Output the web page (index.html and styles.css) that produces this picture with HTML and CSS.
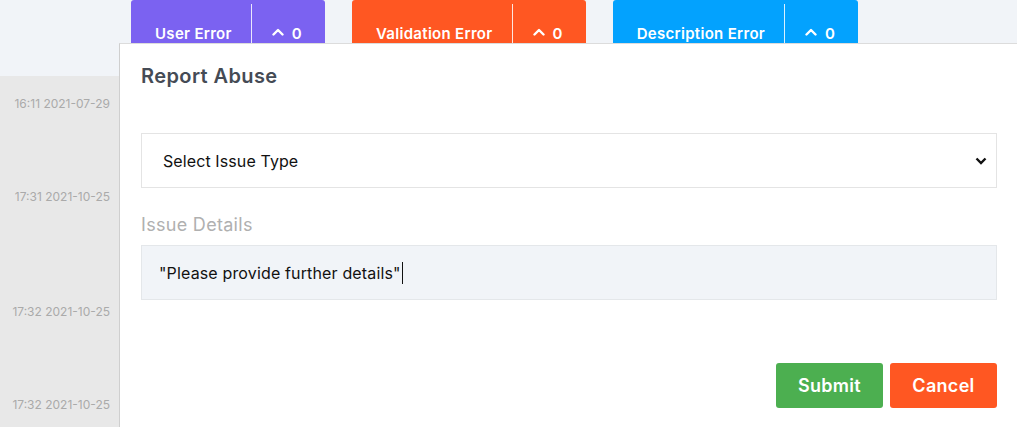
FILE: index.html
```html
<!DOCTYPE html>
<html lang="en">
<head>
  <meta charset="UTF-8">
  <title>Report Abuse</title>
  <link rel="stylesheet" href="styles.css">
</head>
<body>
  <div class="error-bar">
    <div class="err-btn purple">
      <span class="err-label">User Error</span>
      <span class="err-count">
        <svg width="12" height="8" viewBox="0 0 12 8"><path d="M1.5 6.5 L6 2 L10.5 6.5" fill="none" stroke="#fff" stroke-width="2.4" stroke-linecap="round" stroke-linejoin="round"/></svg>
        0
      </span>
    </div>
    <div class="err-btn orange">
      <span class="err-label">Validation Error</span>
      <span class="err-count">
        <svg width="12" height="8" viewBox="0 0 12 8"><path d="M1.5 6.5 L6 2 L10.5 6.5" fill="none" stroke="#fff" stroke-width="2.4" stroke-linecap="round" stroke-linejoin="round"/></svg>
        0
      </span>
    </div>
    <div class="err-btn blue">
      <span class="err-label">Description Error</span>
      <span class="err-count">
        <svg width="12" height="8" viewBox="0 0 12 8"><path d="M1.5 6.5 L6 2 L10.5 6.5" fill="none" stroke="#fff" stroke-width="2.4" stroke-linecap="round" stroke-linejoin="round"/></svg>
        0
      </span>
    </div>
  </div>

  <div class="main">
    <div class="timeline">
      <div class="stamp first">16:11 2021-07-29</div>
      <div class="stamp">17:31 2021-10-25</div>
      <div class="stamp long">17:32 2021-10-25</div>
      <div class="stamp">17:32 2021-10-25</div>
    </div>

    <div class="modal">
      <h2>Report Abuse</h2>
      <div class="select-wrap">
        <select class="issue-select">
          <option>Select Issue Type</option>
        </select>
        <svg class="select-arrow" width="12" height="8" viewBox="0 0 12 8"><path d="M1.5 1.5 L6 6 L10.5 1.5" fill="none" stroke="#111" stroke-width="2.4"/></svg>
      </div>
      <label class="field-label">Issue Details</label>
      <div class="details-box">"Please provide further details"<span class="caret"></span></div>
      <div class="actions">
        <button class="btn submit">Submit</button>
        <button class="btn cancel">Cancel</button>
      </div>
    </div>
  </div>
</body>
</html>
```

FILE: styles.css
```css
body {
  margin: 0;
  font-family: Inter, "Open Sans", sans-serif;
  background-color: #f1f4f8;
  overflow: hidden;
}
.error-bar {
  display: flex;
  gap: 27px;
  padding-left: 131px;
  height: 43px;
  overflow: hidden;
}
.err-btn {
  display: flex;
  height: 66px;
  color: #fff;
  font-size: 15px;
  font-weight: 600;
  letter-spacing: 0.3px;
  border-radius: 3px 3px 0 0;
}
.purple { background-color: #7b62f1; }
.orange { background-color: #ff5722; }
.blue { background-color: #03a2fe; }
.err-label {
  display: flex;
  align-items: center;
  padding: 0 19px 0 24px;
}
.err-count {
  display: flex;
  align-items: center;
  gap: 8px;
  margin-top: 4px;
  padding: 0 23px 4px 20px;
  border-left: 1px solid rgba(255,255,255,0.85);
}
.err-count svg {
  margin-top: -3px;
}
.main {
  display: flex;
}
.timeline {
  width: 119px;
  margin-top: 33px;
  height: 400px;
  background-color: #e8e8e8;
  text-align: right;
  padding-right: 9px;
  box-sizing: border-box;
}
.stamp {
  font-size: 12px;
  line-height: 16px;
  color: #aaa;
  margin-top: 77px;
}
.stamp.first { margin-top: 20px; }
.stamp.long { margin-top: 99px; }
.modal {
  flex: 1;
  background-color: #fff;
  border-top: 1px solid #dcdcdc;
  border-left: 1px solid #cfcfcf;
  padding: 0 20px 0 21px;
  height: 420px;
}
.modal h2 {
  margin: 18px 0 0;
  font-size: 20px;
  font-weight: 600;
  letter-spacing: 0.4px;
  color: #454b55;
  line-height: 28px;
}
.select-wrap {
  position: relative;
  margin-top: 43px;
}
.issue-select {
  appearance: none;
  width: 100%;
  height: 55px;
  border: 1px solid #e4e4e4;
  border-radius: 0;
  background-color: #fff;
  font-family: inherit;
  font-size: 16px;
  letter-spacing: 0.1px;
  color: #111;
  padding: 0 21px;
}
.select-arrow {
  position: absolute;
  right: 10px;
  top: 24px;
}
.field-label {
  display: block;
  margin-top: 25px;
  font-size: 18px;
  letter-spacing: 0.3px;
  color: #b0b0b0;
  line-height: 24px;
}
.details-box {
  margin-top: 8px;
  height: 55px;
  box-sizing: border-box;
  background-color: #f1f4f8;
  border: 1px solid #e4e7ea;
  padding: 0 17px;
  display: flex;
  align-items: center;
  font-size: 16px;
  letter-spacing: 0.15px;
  color: #111;
}
.caret {
  display: inline-block;
  width: 1px;
  height: 22px;
  background-color: #111;
  margin-left: 1px;
}
.actions {
  display: flex;
  justify-content: flex-end;
  gap: 7px;
  margin-top: 63px;
}
.btn {
  border: none;
  border-radius: 3px;
  height: 45px;
  width: 107px;
  color: #fff;
  font-family: inherit;
  font-size: 18px;
  font-weight: 600;
  letter-spacing: 0.3px;
}
.submit { background-color: #4caf50; }
.cancel { background-color: #ff5722; }
```
